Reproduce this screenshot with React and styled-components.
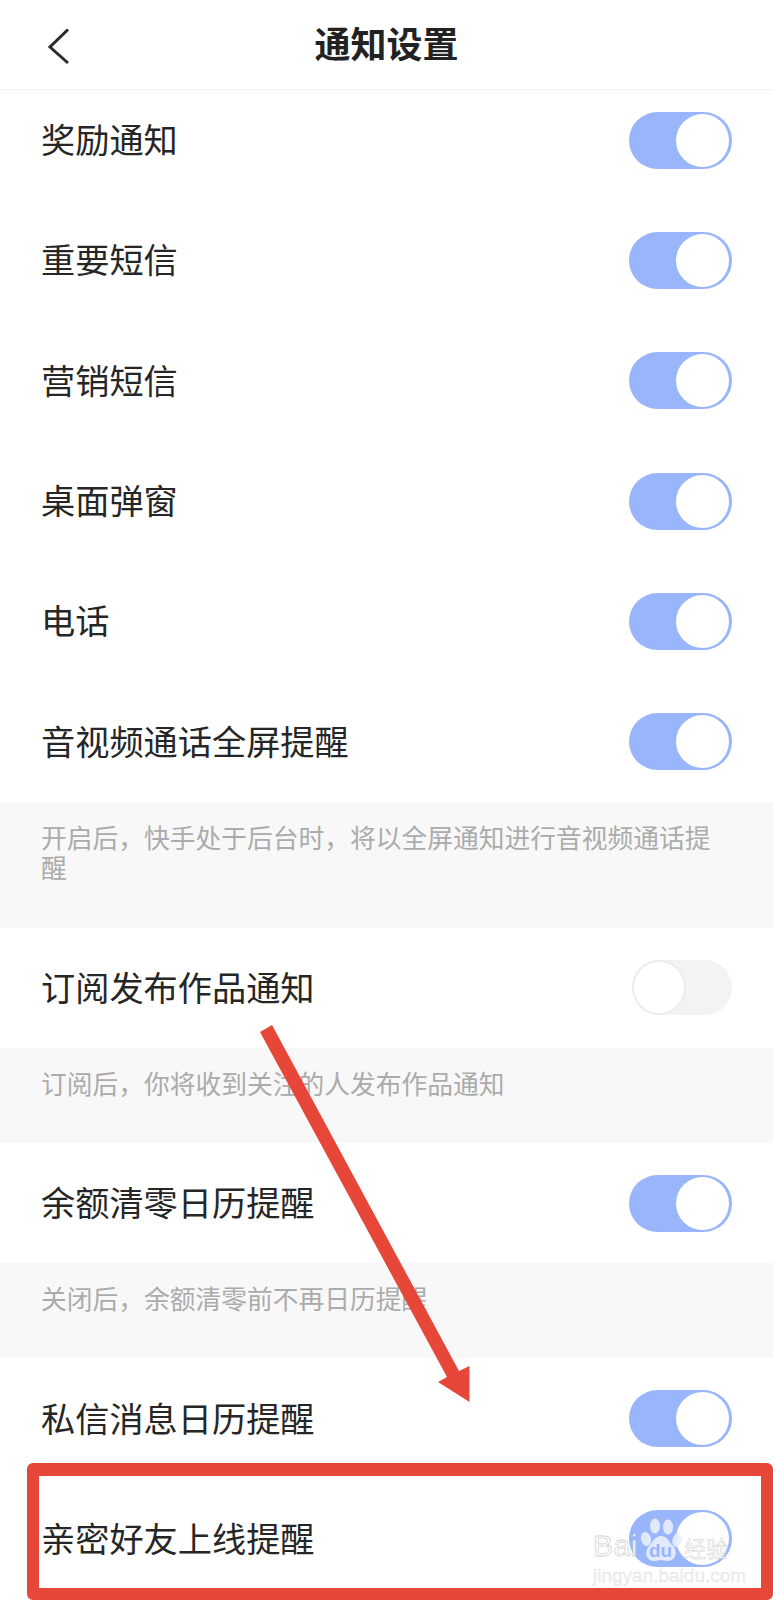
import React from "react";
import styled, { createGlobalStyle } from "styled-components";

const Global = createGlobalStyle`
  html, body { margin: 0; padding: 0; background: #fff; }
  body { font-family: "Noto Sans CJK SC", "Noto Sans", sans-serif; }
`;

const Page = styled.div`
  position: relative;
  width: 773px;
  height: 1600px;
  overflow: hidden;
  background: #fff;
`;

const Header = styled.header`
  position: relative;
  z-index: 1;
  height: 90px;
  box-sizing: border-box;
  display: grid;
  grid-template-columns: 70px 1fr 70px;
  align-items: center;
  padding-bottom: 6px;
  background: #fff;
  border-bottom: 1px solid #f1f1f1;
`;

const Back = styled.button`
  display: flex;
  align-items: center;
  justify-content: flex-end;
  border: 0;
  background: none;
  padding: 8px 0 0 0;
  color: #2a2a2a;
`;

const Title = styled.h1`
  margin: 0;
  font-size: 36px;
  line-height: 44px;
  font-weight: 700;
  color: #222;
  text-align: center;
`;

const List = styled.main`
  margin-top: -10px;
`;

const Row = styled.div`
  height: 120.3px;
  box-sizing: border-box;
  padding: 0 41px;
  display: flex;
  align-items: center;
  justify-content: space-between;
  background: #fff;
`;

const Label = styled.span`
  font-size: 34.2px;
  line-height: 44px;
  padding-bottom: 4px;
  color: #262626;
`;

const Track = styled.span`
  width: ${p => (p.$on ? 103 : 100)}px;
  height: ${p => (p.$on ? 57 : 55)}px;
  box-sizing: border-box;
  border-radius: 29px;
  display: flex;
  align-items: flex-start;
  justify-content: ${p => (p.$on ? "flex-end" : "flex-start")};
  padding: ${p => (p.$on ? "2px 3px 0" : "0")};
  background: ${p => (p.$on ? "#99b5fb" : "#f3f3f3")};
`;

const Knob = styled.span`
  width: ${p => (p.$on ? 53 : 54)}px;
  height: ${p => (p.$on ? 53 : 55)}px;
  box-sizing: border-box;
  border-radius: 50%;
  background: #fff;
  border: ${p => (p.$on ? "0" : "2px solid #ededed")};
`;

const Note = styled.p`
  margin: 0;
  height: ${p => p.$height}px;
  box-sizing: border-box;
  padding: 20px 41px 0;
  background: #f8f8f8;
  color: #ababab;
  font-size: 25.76px;
  line-height: 30px;
`;

const Arrow = styled.svg`
  position: absolute;
  left: 0;
  top: 0;
  pointer-events: none;
`;

const Frame = styled.div`
  position: absolute;
  left: 27px;
  top: 1463px;
  width: 746px;
  height: 137px;
  box-sizing: border-box;
  border: solid #e64738;
  border-width: 13px 12px 12px 12px;
  border-radius: 6px;
`;

const Watermark = styled.div`
  position: absolute;
  left: 593px;
  top: 1518px;
  width: 140px;
  display: flex;
  flex-direction: column;
  gap: 3px;
  color: rgba(255, 255, 255, 0.85);
`;

const Brand = styled.div`
  display: flex;
  align-items: flex-end;
  height: 46px;
`;

const Bai = styled.span`
  width: 47px;
  font-family: "Liberation Sans", sans-serif;
  font-size: 30px;
  line-height: 36px;
  letter-spacing: 0.5px;
  -webkit-text-stroke: 0.8px rgba(180, 180, 180, 0.6);
`;

const PawBox = styled.span`
  position: relative;
  width: 42px;
  height: 46px;
  margin-right: 2px;
`;

const Du = styled.span`
  position: absolute;
  left: 9px;
  top: 23px;
  font-family: "Liberation Sans", sans-serif;
  font-size: 19px;
  line-height: 20px;
  font-weight: 700;
  color: #99b5fb;
`;

const Jing = styled.span`
  font-size: 22px;
  line-height: 34px;
  -webkit-text-stroke: 0.5px rgba(170, 170, 170, 0.6);
`;

const Domain = styled.span`
  font-family: "Liberation Sans", sans-serif;
  font-size: 19px;
  line-height: 18px;
  white-space: nowrap;
  color: rgba(240, 240, 240, 0.9);
  -webkit-text-stroke: 0.3px rgba(190, 190, 190, 0.5);
`;

const Switch = ({ on = true }) => (
  <Track $on={on}>
    <Knob $on={on} />
  </Track>
);

const Item = ({ label, on }) => (
  <Row>
    <Label>{label}</Label>
    <Switch on={on} />
  </Row>
);

export default function App() {
  return (
    <Page>
      <Global />
      <Header>
        <Back aria-label="返回">
          <svg width="24" height="38" viewBox="0 0 24 38" fill="none">
            <path d="M22 2.5 4 20 22 36" stroke="currentColor" strokeWidth="3" />
          </svg>
        </Back>
        <Title>通知设置</Title>
        <span />
      </Header>
      <List>
        <Item label="奖励通知" />
        <Item label="重要短信" />
        <Item label="营销短信" />
        <Item label="桌面弹窗" />
        <Item label="电话" />
        <Item label="音视频通话全屏提醒" />
        <Note $height={126}>开启后，快手处于后台时，将以全屏通知进行音视频通话提醒</Note>
        <Item label="订阅发布作品通知" on={false} />
        <Note $height={95}>订阅后，你将收到关注的人发布作品通知</Note>
        <Item label="余额清零日历提醒" />
        <Note $height={95}>关闭后，余额清零前不再日历提醒</Note>
        <Item label="私信消息日历提醒" />
        <Item label="亲密好友上线提醒" />
      </List>
      <Arrow width="773" height="1600" viewBox="0 0 773 1600">
        <path
          d="M260 1032 272 1025 459 1371 469.5 1366 469.5 1402 438 1382 447 1377Z"
          fill="#e64738"
        />
      </Arrow>
      <Frame />
      <Watermark>
        <Brand>
          <Bai>Bai</Bai>
          <PawBox>
            <svg width="42" height="46" viewBox="0 0 42 46" fill="rgba(232,238,252,0.92)">
              <ellipse cx="6" cy="21" rx="5" ry="7" transform="rotate(-15 6 21)" />
              <ellipse cx="15" cy="8" rx="5" ry="7.5" />
              <ellipse cx="28" cy="9" rx="5" ry="7.5" />
              <ellipse cx="37" cy="22" rx="4.5" ry="7" transform="rotate(15 37 22)" />
              <path d="M21 18c6 0 8 6 12 10 5 5 3 15-5 15-3 0-5-1-7-1s-4 1-7 1c-8 0-10-9-5-15 4-4 6-10 12-10Z" />
            </svg>
            <Du>du</Du>
          </PawBox>
          <Jing>经验</Jing>
        </Brand>
        <Domain>jingyan.baidu.com</Domain>
      </Watermark>
    </Page>
  );
}
